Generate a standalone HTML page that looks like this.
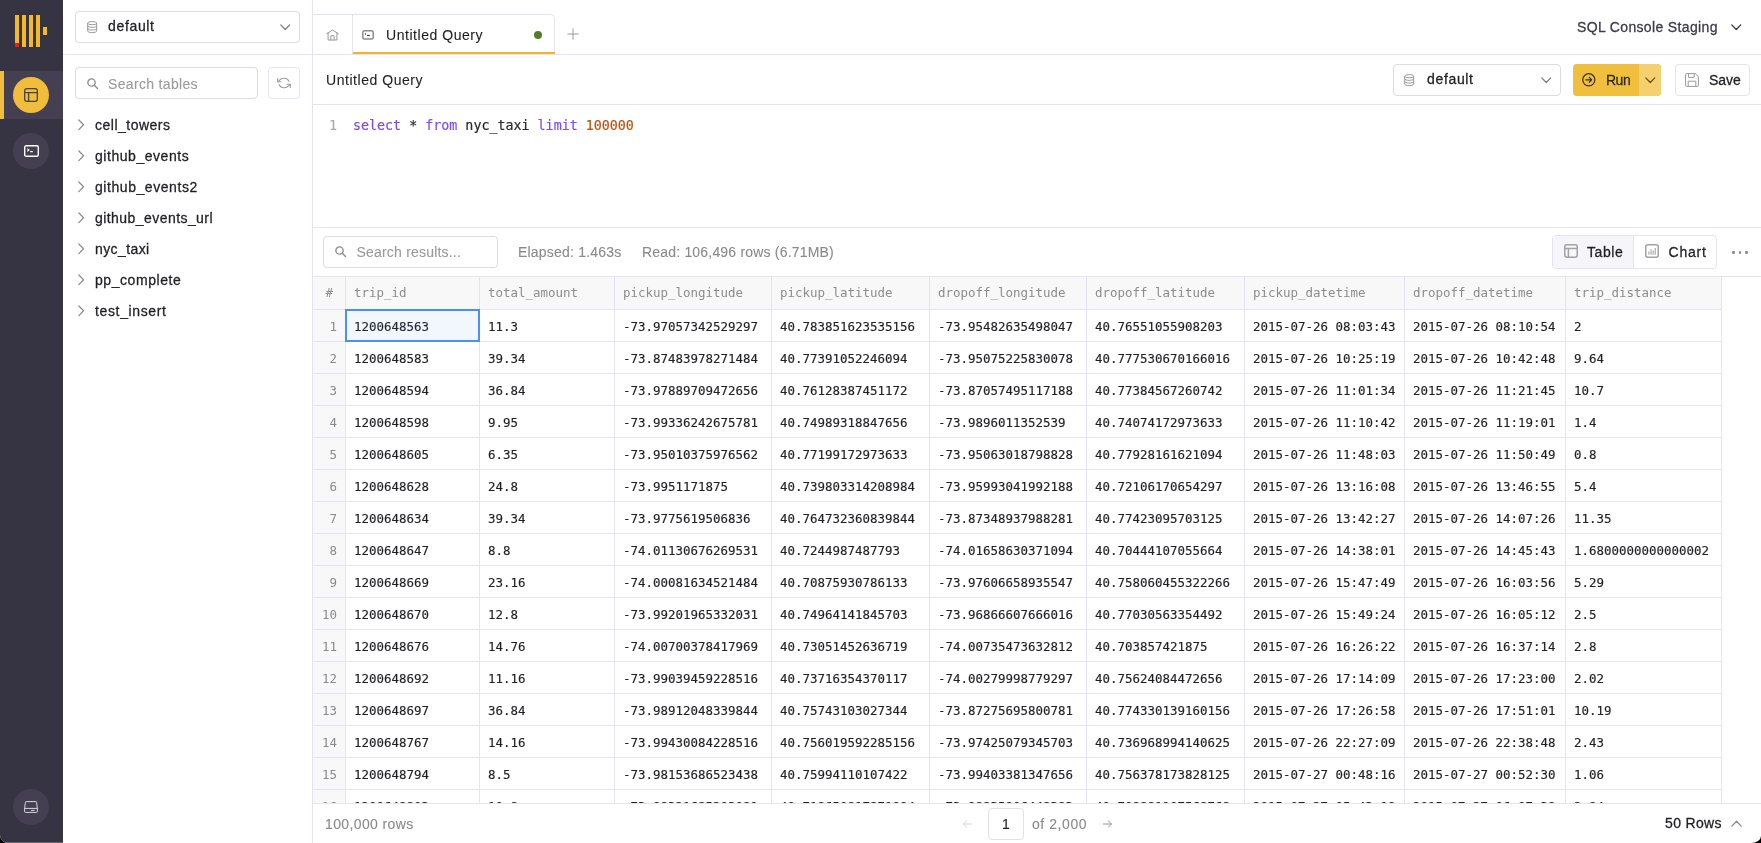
<!DOCTYPE html>
<html lang="en"><head><meta charset="utf-8"><title>SQL Console</title>
<style>
*{box-sizing:border-box;margin:0;padding:0}
html,body{width:1761px;height:843px;overflow:hidden;background:#000}
body{font-family:"Liberation Sans",Arial,sans-serif;font-size:14px;color:#1f1f24}
#app{will-change:transform;position:absolute;left:0;top:0;width:1761px;height:843px;background:#fff;border-radius:0 0 10px 8px / 0 0 7px 8px;overflow:hidden}
.abs{position:absolute}
.t{position:absolute;white-space:pre;line-height:20px;height:20px;-webkit-text-stroke:0.1px currentColor}
.m{-webkit-text-stroke:0.28px currentColor}
.mono{font-family:"DejaVu Sans Mono","Liberation Mono",monospace}
#side{position:absolute;left:0;top:0;width:63px;height:843px;background:#363342}
.circ{position:absolute;left:13px;width:36px;height:36px;border-radius:50%;background:#444051}
.box{position:absolute;border:1px solid #dcdcdc;border-radius:4px;background:#fff}
.lbox{position:absolute;border:1px solid #e3e2f7;border-radius:4px;background:#fff}
.hl{position:absolute;height:1px;background:#e3e2f7}
.vl{position:absolute;width:1px;background:#e3e2f7}
svg{position:absolute;overflow:visible}
.cell{position:absolute;white-space:pre;font-size:12.46px;line-height:16px;height:16px;color:#1f1f24;-webkit-text-stroke:0.15px currentColor}
.hd{color:#8c8c8c;-webkit-text-stroke:0}
.rn{-webkit-text-stroke:0;color:#8a8a90;text-align:right;width:20px}
</style></head>
<body><div id="app">
<div id="side">
<div class="abs" style="left:15px;top:15px;width:4px;height:32px;background:#f1b92b"></div>
<div class="abs" style="left:22px;top:15px;width:4px;height:32px;background:#f1b92b"></div>
<div class="abs" style="left:29px;top:15px;width:4px;height:32px;background:#f1b92b"></div>
<div class="abs" style="left:36px;top:15px;width:4px;height:32px;background:#f1b92b"></div>
<div class="abs" style="left:15px;top:43px;width:4px;height:4px;background:#ee1c1c"></div>
<div class="abs" style="left:43px;top:27px;width:4px;height:8px;background:#f1b92b"></div>
<div class="abs" style="left:0;top:71px;width:63px;height:48px;background:#444051"></div>
<div class="abs" style="left:0;top:71px;width:4px;height:48px;background:#f1bd3c"></div>
<div class="circ" style="top:77px;background:#f1bd3c"></div>
<svg style="left:24px;top:88px" width="14" height="14" viewBox="0 0 14 14" fill="none" stroke="#4a4234" stroke-width="1.3"><rect x="0.7" y="0.7" width="12.6" height="12.6" rx="2"/><path d="M0.7 4.6H13.3M4.6 4.6V13.3"/></svg>
<div class="circ" style="top:133px"></div>
<svg style="left:23.5px;top:145px" width="15" height="12" viewBox="0 0 15 12" fill="none" stroke="#fff" stroke-width="1.4"><rect x="0.7" y="0.7" width="13.6" height="10.6" rx="1.6"/><path d="M3.2 3.6L5 5L3.2 6.4M6.2 6.6H8.8" stroke-width="1.1"/></svg>
<div class="circ" style="top:789px"></div>
<svg style="left:24px;top:801px" width="14" height="12" viewBox="0 0 14 12" fill="none" stroke="#d8d6e0" stroke-width="1"><path d="M2.2 0.6H11.8Q12.6 0.6 12.6 1.4L13.4 8V10.4Q13.4 11.4 12.4 11.4H1.6Q0.6 11.4 0.6 10.4V8L1.4 1.4Q1.4 0.6 2.2 0.6Z"/><path d="M0.8 7.4H13.2M7 9.4H10.6"/></svg>
</div>
<div class="vl" style="left:312px;top:0;height:843px"></div>
<div class="hl" style="left:63px;top:54px;width:1698px"></div>
<div class="box" style="left:75px;top:11px;width:225px;height:32px"></div>
<svg style="left:87px;top:20.5px" width="10.3" height="12.2" viewBox="0 0 11 13" fill="none" stroke="#8e8e8e" stroke-width="0.95"><ellipse cx="5.5" cy="2.3" rx="4.8" ry="1.7"/><path d="M0.7 2.3V10.7C0.7 11.6 2.8 12.4 5.5 12.4S10.3 11.6 10.3 10.7V2.3M0.7 5.1C0.7 6 2.8 6.8 5.5 6.8S10.3 6 10.3 5.1M0.7 7.9C0.7 8.8 2.8 9.6 5.5 9.6S10.3 8.8 10.3 7.9"/></svg>
<div class="t m" style="left:108px;top:16px;letter-spacing:0.66px">default</div>
<svg style="left:280px;top:24px" width="10.5" height="6.7" viewBox="0 0 11 7" fill="none" stroke="#808080" stroke-width="1.4" stroke-linecap="round" stroke-linejoin="round"><path d="M0.8 0.9L5.5 5.8L10.2 0.9"/></svg>
<div class="box" style="left:75px;top:67px;width:183px;height:32px"></div>
<svg style="left:87px;top:77.5px" width="11.3" height="11.3" viewBox="0 0 12 12" fill="none" stroke="#8c8c8c" stroke-width="1.45" stroke-linecap="round"><circle cx="4.8" cy="4.8" r="3.9"/><path d="M7.8 7.8L11.2 11.2"/></svg>
<div class="t" style="left:108px;top:74px;color:#9a9a9a;letter-spacing:0.33px">Search tables</div>
<div class="lbox" style="left:268px;top:67px;width:32px;height:32px"></div>
<svg style="left:277px;top:77px" width="14" height="12" viewBox="0 0 14 12" fill="none" stroke="#9c9c9c" stroke-width="1.1" stroke-linecap="round" stroke-linejoin="round"><path d="M11.9 4.2A5.3 4.6 0 0 0 2.4 3.4L0.9 4.6M2.1 7.8A5.3 4.6 0 0 0 11.6 8.6L13.1 7.4"/><path d="M0.7 1.6V4.7H3.9M13.3 10.4V7.3H10.1"/></svg>
<svg style="left:78px;top:119px" width="6.6" height="11.6" viewBox="0 0 7 12" fill="none" stroke="#8c8c8c" stroke-width="1.3" stroke-linecap="round" stroke-linejoin="round"><path d="M0.9 0.9L5.9 6L0.9 11.1"/></svg>
<div class="t m" style="left:95px;top:115px;letter-spacing:0.5px">cell_towers</div>
<svg style="left:78px;top:150px" width="6.6" height="11.6" viewBox="0 0 7 12" fill="none" stroke="#8c8c8c" stroke-width="1.3" stroke-linecap="round" stroke-linejoin="round"><path d="M0.9 0.9L5.9 6L0.9 11.1"/></svg>
<div class="t m" style="left:95px;top:146px;letter-spacing:0.54px">github_events</div>
<svg style="left:78px;top:181px" width="6.6" height="11.6" viewBox="0 0 7 12" fill="none" stroke="#8c8c8c" stroke-width="1.3" stroke-linecap="round" stroke-linejoin="round"><path d="M0.9 0.9L5.9 6L0.9 11.1"/></svg>
<div class="t m" style="left:95px;top:177px;letter-spacing:0.56px">github_events2</div>
<svg style="left:78px;top:212px" width="6.6" height="11.6" viewBox="0 0 7 12" fill="none" stroke="#8c8c8c" stroke-width="1.3" stroke-linecap="round" stroke-linejoin="round"><path d="M0.9 0.9L5.9 6L0.9 11.1"/></svg>
<div class="t m" style="left:95px;top:208px;letter-spacing:0.44px">github_events_url</div>
<svg style="left:78px;top:243px" width="6.6" height="11.6" viewBox="0 0 7 12" fill="none" stroke="#8c8c8c" stroke-width="1.3" stroke-linecap="round" stroke-linejoin="round"><path d="M0.9 0.9L5.9 6L0.9 11.1"/></svg>
<div class="t m" style="left:95px;top:239px;letter-spacing:0.41px">nyc_taxi</div>
<svg style="left:78px;top:274px" width="6.6" height="11.6" viewBox="0 0 7 12" fill="none" stroke="#8c8c8c" stroke-width="1.3" stroke-linecap="round" stroke-linejoin="round"><path d="M0.9 0.9L5.9 6L0.9 11.1"/></svg>
<div class="t m" style="left:95px;top:270px;letter-spacing:0.56px">pp_complete</div>
<svg style="left:78px;top:305px" width="6.6" height="11.6" viewBox="0 0 7 12" fill="none" stroke="#8c8c8c" stroke-width="1.3" stroke-linecap="round" stroke-linejoin="round"><path d="M0.9 0.9L5.9 6L0.9 11.1"/></svg>
<div class="t m" style="left:95px;top:301px;letter-spacing:0.64px">test_insert</div>
<div class="abs" style="left:313px;top:14px;width:242px;height:41px;border-top:1px solid #e3e2f7;border-right:1px solid #e3e2f7;border-radius:0 5px 0 0"></div>
<div class="vl" style="left:352px;top:15px;height:39px"></div>
<div class="abs" style="left:353px;top:52px;width:202px;height:2px;background:#f0b429"></div>
<svg style="left:326px;top:28px" width="13" height="13" viewBox="0 0 13 13" fill="none" stroke="#9a9a9a" stroke-width="1" stroke-linejoin="round" stroke-linecap="round"><path d="M0.7 5.7L6.5 2L12.3 5.7M2.1 5V12H10.9V5M4.9 12V7.7H8.1V12"/></svg>
<svg style="left:362px;top:30px" width="12" height="10" viewBox="0 0 12 10" fill="none"><rect x="0.8" y="0.8" width="10.4" height="8.3" rx="1.5" stroke="#8c8c8c" stroke-width="1.5"/><path d="M3.5 3.3V4.7M5 5.4H7.8" stroke="#2a2a2a" stroke-width="1"/></svg>
<div class="t" style="left:386px;top:25px;letter-spacing:0.54px">Untitled Query</div>
<div class="abs" style="left:534px;top:31px;width:8px;height:8px;border-radius:50%;background:#557d27"></div>
<svg style="left:567px;top:28px" width="12" height="12" viewBox="0 0 12 12" fill="none" stroke="#9a9a9a" stroke-width="1"><path d="M6 0.5V11.5M0.5 6H11.5"/></svg>
<div class="t m" style="left:1577px;top:17px;color:#3a3a48;letter-spacing:0.35px">SQL Console Staging</div>
<svg style="left:1731px;top:24px" width="10.5" height="6.7" viewBox="0 0 11 7" fill="none" stroke="#3a3a48" stroke-width="1.4" stroke-linecap="round" stroke-linejoin="round"><path d="M0.8 0.9L5.5 5.8L10.2 0.9"/></svg>
<div class="hl" style="left:313px;top:104px;width:1448px"></div>
<div class="t" style="left:326px;top:70px;letter-spacing:0.54px">Untitled Query</div>
<div class="box" style="left:1393px;top:64px;width:168px;height:32px"></div>
<svg style="left:1404px;top:73.5px" width="10.3" height="12.2" viewBox="0 0 11 13" fill="none" stroke="#8e8e8e" stroke-width="0.95"><ellipse cx="5.5" cy="2.3" rx="4.8" ry="1.7"/><path d="M0.7 2.3V10.7C0.7 11.6 2.8 12.4 5.5 12.4S10.3 11.6 10.3 10.7V2.3M0.7 5.1C0.7 6 2.8 6.8 5.5 6.8S10.3 6 10.3 5.1M0.7 7.9C0.7 8.8 2.8 9.6 5.5 9.6S10.3 8.8 10.3 7.9"/></svg>
<div class="t m" style="left:1427px;top:69px;letter-spacing:0.66px">default</div>
<svg style="left:1540.5px;top:77px" width="10.5" height="6.7" viewBox="0 0 11 7" fill="none" stroke="#808080" stroke-width="1.4" stroke-linecap="round" stroke-linejoin="round"><path d="M0.8 0.9L5.5 5.8L10.2 0.9"/></svg>
<div class="abs" style="left:1573px;top:64px;width:88px;height:32px;border-radius:4px;background:#f1bf3e;overflow:hidden"><div class="abs" style="left:66px;top:0;width:22px;height:32px;background:#f5d06f"></div></div>
<svg style="left:1581.6px;top:73px" width="13.6" height="13.6" viewBox="0 0 15 15" fill="none" stroke="#3b3320" stroke-width="1.4" stroke-linecap="round" stroke-linejoin="round"><circle cx="7.5" cy="7.5" r="6.7"/><path d="M4.2 7.5H10.6M8 4.8L10.7 7.5L8 10.2"/></svg>
<div class="t m" style="left:1606px;top:70px;color:#2e2a1c;letter-spacing:-0.5px">Run</div>
<svg style="left:1644.5px;top:77px" width="10.5" height="6.7" viewBox="0 0 11 7" fill="none" stroke="#6b5518" stroke-width="1.4" stroke-linecap="round" stroke-linejoin="round"><path d="M0.8 0.9L5.5 5.8L10.2 0.9"/></svg>
<div class="lbox" style="left:1675px;top:64px;width:75px;height:32px"></div>
<svg style="left:1685px;top:73px" width="14" height="14" viewBox="0 0 14 14" fill="none" stroke="#9a9a9a" stroke-width="1" stroke-linejoin="round"><path d="M1.6 0.6H10.2L13.4 3.6V12.4Q13.4 13.4 12.4 13.4H1.6Q0.6 13.4 0.6 12.4V1.6Q0.6 0.6 1.6 0.6Z"/><path d="M3.6 0.8V4.4H9.2V0.8M3.2 13.2V8.2H10.8V13.2"/></svg>
<div class="t m" style="left:1709px;top:70px">Save</div>
<div class="t mono" style="left:329px;top:116px;font-size:13.33px;color:#aaaaaa">1</div>
<div class="t mono" style="left:353px;top:116px;font-size:13.33px;color:#2a2a2a;-webkit-text-stroke:0.2px currentColor"><span style="color:#7c4dff">select</span> * <span style="color:#7c4dff">from</span> nyc_taxi <span style="color:#7c4dff">limit</span> <span style="color:#c4500c">100000</span></div>
<div class="hl" style="left:313px;top:227px;width:1448px"></div>
<div class="box" style="left:323px;top:236px;width:175px;height:32px"></div>
<svg style="left:335px;top:246px" width="11.3" height="11.3" viewBox="0 0 12 12" fill="none" stroke="#8c8c8c" stroke-width="1.45" stroke-linecap="round"><circle cx="4.8" cy="4.8" r="3.9"/><path d="M7.8 7.8L11.2 11.2"/></svg>
<div class="t" style="left:356.5px;top:242px;color:#9a9a9a;letter-spacing:0.2px">Search results...</div>
<div class="t" style="left:518px;top:242px;color:#8a8a8a;letter-spacing:0.21px">Elapsed: 1.463s</div>
<div class="t" style="left:642px;top:242px;color:#8a8a8a;letter-spacing:0.19px">Read: 106,496 rows (6.71MB)</div>
<div class="abs" style="left:1552px;top:235px;width:165px;height:34px;border:1px solid #e3e2f7;border-radius:4px;background:#fff;overflow:hidden"><div class="abs" style="left:0;top:0;width:81px;height:32px;background:#f6f6fa;border-right:1px solid #e3e2f7"></div></div>
<svg style="left:1564px;top:244px" width="14" height="14" viewBox="0 0 14 14" fill="none" stroke="#a2a2a2" stroke-width="1.5"><rect x="0.75" y="0.75" width="12.5" height="12.5" rx="2.2"/><path d="M0.6 4.4H13.4M4.4 4.4V13.4"/></svg>
<div class="t m" style="left:1587px;top:242px;letter-spacing:0.58px">Table</div>
<svg style="left:1645px;top:244px" width="14" height="14" viewBox="0 0 14 14" fill="none" stroke="#a2a2a2" stroke-width="1.5"><rect x="0.75" y="0.75" width="12.5" height="12.5" rx="2.2"/><path d="M3.9 10.8V7.6M6 10.8V5.2M8.1 10.8V6.6M10.2 10.8V4" stroke-width="1.1"/></svg>
<div class="t m" style="left:1668.5px;top:242px;letter-spacing:0.79px">Chart</div>
<div class="abs" style="left:1732px;top:251px;width:2.6px;height:2.6px;border-radius:50%;background:#8a8a8a"></div>
<div class="abs" style="left:1738.5px;top:251px;width:2.6px;height:2.6px;border-radius:50%;background:#8a8a8a"></div>
<div class="abs" style="left:1745px;top:251px;width:2.6px;height:2.6px;border-radius:50%;background:#8a8a8a"></div>
<div class="abs" style="left:313px;top:276px;width:1448px;height:527px;overflow:hidden">
<div class="abs" style="left:0;top:1px;width:1408px;height:33px;background:#f8f8f8"></div>
<div class="abs" style="left:0;top:34px;width:32px;height:520px;background:#f8f8f8"></div>
<div class="hl" style="left:0;top:0;width:1448px"></div>
<div class="hl" style="left:0;top:33px;width:1409px"></div>
<div class="hl" style="left:0;top:65px;width:1409px"></div>
<div class="hl" style="left:0;top:97px;width:1409px"></div>
<div class="hl" style="left:0;top:129px;width:1409px"></div>
<div class="hl" style="left:0;top:161px;width:1409px"></div>
<div class="hl" style="left:0;top:193px;width:1409px"></div>
<div class="hl" style="left:0;top:225px;width:1409px"></div>
<div class="hl" style="left:0;top:257px;width:1409px"></div>
<div class="hl" style="left:0;top:289px;width:1409px"></div>
<div class="hl" style="left:0;top:321px;width:1409px"></div>
<div class="hl" style="left:0;top:353px;width:1409px"></div>
<div class="hl" style="left:0;top:385px;width:1409px"></div>
<div class="hl" style="left:0;top:417px;width:1409px"></div>
<div class="hl" style="left:0;top:449px;width:1409px"></div>
<div class="hl" style="left:0;top:481px;width:1409px"></div>
<div class="hl" style="left:0;top:513px;width:1409px"></div>
<div class="hl" style="left:0;top:545px;width:1409px"></div>
<div class="vl" style="left:32px;top:0;height:560px"></div>
<div class="vl" style="left:166px;top:0;height:560px"></div>
<div class="vl" style="left:301px;top:0;height:560px"></div>
<div class="vl" style="left:458px;top:0;height:560px"></div>
<div class="vl" style="left:616px;top:0;height:560px"></div>
<div class="vl" style="left:773px;top:0;height:560px"></div>
<div class="vl" style="left:931px;top:0;height:560px"></div>
<div class="vl" style="left:1091px;top:0;height:560px"></div>
<div class="vl" style="left:1252px;top:0;height:560px"></div>
<div class="vl" style="left:1408px;top:0;height:560px"></div>
<div class="cell mono hd" style="left:12.5px;top:9px">#</div>
<div class="cell mono hd" style="left:41px;top:9px">trip_id</div>
<div class="cell mono hd" style="left:175px;top:9px">total_amount</div>
<div class="cell mono hd" style="left:310px;top:9px">pickup_longitude</div>
<div class="cell mono hd" style="left:467px;top:9px">pickup_latitude</div>
<div class="cell mono hd" style="left:625px;top:9px">dropoff_longitude</div>
<div class="cell mono hd" style="left:782px;top:9px">dropoff_latitude</div>
<div class="cell mono hd" style="left:940px;top:9px">pickup_datetime</div>
<div class="cell mono hd" style="left:1100px;top:9px">dropoff_datetime</div>
<div class="cell mono hd" style="left:1261px;top:9px">trip_distance</div>
<div class="cell mono rn" style="left:4px;top:43px">1</div>
<div class="cell mono" style="left:41px;top:43px">1200648563</div>
<div class="cell mono" style="left:175px;top:43px">11.3</div>
<div class="cell mono" style="left:310px;top:43px">-73.97057342529297</div>
<div class="cell mono" style="left:467px;top:43px">40.783851623535156</div>
<div class="cell mono" style="left:625px;top:43px">-73.95482635498047</div>
<div class="cell mono" style="left:782px;top:43px">40.76551055908203</div>
<div class="cell mono" style="left:940px;top:43px">2015-07-26 08:03:43</div>
<div class="cell mono" style="left:1100px;top:43px">2015-07-26 08:10:54</div>
<div class="cell mono" style="left:1261px;top:43px">2</div>
<div class="cell mono rn" style="left:4px;top:75px">2</div>
<div class="cell mono" style="left:41px;top:75px">1200648583</div>
<div class="cell mono" style="left:175px;top:75px">39.34</div>
<div class="cell mono" style="left:310px;top:75px">-73.87483978271484</div>
<div class="cell mono" style="left:467px;top:75px">40.77391052246094</div>
<div class="cell mono" style="left:625px;top:75px">-73.95075225830078</div>
<div class="cell mono" style="left:782px;top:75px">40.777530670166016</div>
<div class="cell mono" style="left:940px;top:75px">2015-07-26 10:25:19</div>
<div class="cell mono" style="left:1100px;top:75px">2015-07-26 10:42:48</div>
<div class="cell mono" style="left:1261px;top:75px">9.64</div>
<div class="cell mono rn" style="left:4px;top:107px">3</div>
<div class="cell mono" style="left:41px;top:107px">1200648594</div>
<div class="cell mono" style="left:175px;top:107px">36.84</div>
<div class="cell mono" style="left:310px;top:107px">-73.97889709472656</div>
<div class="cell mono" style="left:467px;top:107px">40.76128387451172</div>
<div class="cell mono" style="left:625px;top:107px">-73.87057495117188</div>
<div class="cell mono" style="left:782px;top:107px">40.77384567260742</div>
<div class="cell mono" style="left:940px;top:107px">2015-07-26 11:01:34</div>
<div class="cell mono" style="left:1100px;top:107px">2015-07-26 11:21:45</div>
<div class="cell mono" style="left:1261px;top:107px">10.7</div>
<div class="cell mono rn" style="left:4px;top:139px">4</div>
<div class="cell mono" style="left:41px;top:139px">1200648598</div>
<div class="cell mono" style="left:175px;top:139px">9.95</div>
<div class="cell mono" style="left:310px;top:139px">-73.99336242675781</div>
<div class="cell mono" style="left:467px;top:139px">40.74989318847656</div>
<div class="cell mono" style="left:625px;top:139px">-73.9896011352539</div>
<div class="cell mono" style="left:782px;top:139px">40.74074172973633</div>
<div class="cell mono" style="left:940px;top:139px">2015-07-26 11:10:42</div>
<div class="cell mono" style="left:1100px;top:139px">2015-07-26 11:19:01</div>
<div class="cell mono" style="left:1261px;top:139px">1.4</div>
<div class="cell mono rn" style="left:4px;top:171px">5</div>
<div class="cell mono" style="left:41px;top:171px">1200648605</div>
<div class="cell mono" style="left:175px;top:171px">6.35</div>
<div class="cell mono" style="left:310px;top:171px">-73.95010375976562</div>
<div class="cell mono" style="left:467px;top:171px">40.77199172973633</div>
<div class="cell mono" style="left:625px;top:171px">-73.95063018798828</div>
<div class="cell mono" style="left:782px;top:171px">40.77928161621094</div>
<div class="cell mono" style="left:940px;top:171px">2015-07-26 11:48:03</div>
<div class="cell mono" style="left:1100px;top:171px">2015-07-26 11:50:49</div>
<div class="cell mono" style="left:1261px;top:171px">0.8</div>
<div class="cell mono rn" style="left:4px;top:203px">6</div>
<div class="cell mono" style="left:41px;top:203px">1200648628</div>
<div class="cell mono" style="left:175px;top:203px">24.8</div>
<div class="cell mono" style="left:310px;top:203px">-73.9951171875</div>
<div class="cell mono" style="left:467px;top:203px">40.739803314208984</div>
<div class="cell mono" style="left:625px;top:203px">-73.95993041992188</div>
<div class="cell mono" style="left:782px;top:203px">40.72106170654297</div>
<div class="cell mono" style="left:940px;top:203px">2015-07-26 13:16:08</div>
<div class="cell mono" style="left:1100px;top:203px">2015-07-26 13:46:55</div>
<div class="cell mono" style="left:1261px;top:203px">5.4</div>
<div class="cell mono rn" style="left:4px;top:235px">7</div>
<div class="cell mono" style="left:41px;top:235px">1200648634</div>
<div class="cell mono" style="left:175px;top:235px">39.34</div>
<div class="cell mono" style="left:310px;top:235px">-73.9775619506836</div>
<div class="cell mono" style="left:467px;top:235px">40.764732360839844</div>
<div class="cell mono" style="left:625px;top:235px">-73.87348937988281</div>
<div class="cell mono" style="left:782px;top:235px">40.77423095703125</div>
<div class="cell mono" style="left:940px;top:235px">2015-07-26 13:42:27</div>
<div class="cell mono" style="left:1100px;top:235px">2015-07-26 14:07:26</div>
<div class="cell mono" style="left:1261px;top:235px">11.35</div>
<div class="cell mono rn" style="left:4px;top:267px">8</div>
<div class="cell mono" style="left:41px;top:267px">1200648647</div>
<div class="cell mono" style="left:175px;top:267px">8.8</div>
<div class="cell mono" style="left:310px;top:267px">-74.01130676269531</div>
<div class="cell mono" style="left:467px;top:267px">40.7244987487793</div>
<div class="cell mono" style="left:625px;top:267px">-74.01658630371094</div>
<div class="cell mono" style="left:782px;top:267px">40.70444107055664</div>
<div class="cell mono" style="left:940px;top:267px">2015-07-26 14:38:01</div>
<div class="cell mono" style="left:1100px;top:267px">2015-07-26 14:45:43</div>
<div class="cell mono" style="left:1261px;top:267px">1.6800000000000002</div>
<div class="cell mono rn" style="left:4px;top:299px">9</div>
<div class="cell mono" style="left:41px;top:299px">1200648669</div>
<div class="cell mono" style="left:175px;top:299px">23.16</div>
<div class="cell mono" style="left:310px;top:299px">-74.00081634521484</div>
<div class="cell mono" style="left:467px;top:299px">40.70875930786133</div>
<div class="cell mono" style="left:625px;top:299px">-73.97606658935547</div>
<div class="cell mono" style="left:782px;top:299px">40.758060455322266</div>
<div class="cell mono" style="left:940px;top:299px">2015-07-26 15:47:49</div>
<div class="cell mono" style="left:1100px;top:299px">2015-07-26 16:03:56</div>
<div class="cell mono" style="left:1261px;top:299px">5.29</div>
<div class="cell mono rn" style="left:4px;top:331px">10</div>
<div class="cell mono" style="left:41px;top:331px">1200648670</div>
<div class="cell mono" style="left:175px;top:331px">12.8</div>
<div class="cell mono" style="left:310px;top:331px">-73.99201965332031</div>
<div class="cell mono" style="left:467px;top:331px">40.74964141845703</div>
<div class="cell mono" style="left:625px;top:331px">-73.96866607666016</div>
<div class="cell mono" style="left:782px;top:331px">40.77030563354492</div>
<div class="cell mono" style="left:940px;top:331px">2015-07-26 15:49:24</div>
<div class="cell mono" style="left:1100px;top:331px">2015-07-26 16:05:12</div>
<div class="cell mono" style="left:1261px;top:331px">2.5</div>
<div class="cell mono rn" style="left:4px;top:363px">11</div>
<div class="cell mono" style="left:41px;top:363px">1200648676</div>
<div class="cell mono" style="left:175px;top:363px">14.76</div>
<div class="cell mono" style="left:310px;top:363px">-74.00700378417969</div>
<div class="cell mono" style="left:467px;top:363px">40.73051452636719</div>
<div class="cell mono" style="left:625px;top:363px">-74.00735473632812</div>
<div class="cell mono" style="left:782px;top:363px">40.703857421875</div>
<div class="cell mono" style="left:940px;top:363px">2015-07-26 16:26:22</div>
<div class="cell mono" style="left:1100px;top:363px">2015-07-26 16:37:14</div>
<div class="cell mono" style="left:1261px;top:363px">2.8</div>
<div class="cell mono rn" style="left:4px;top:395px">12</div>
<div class="cell mono" style="left:41px;top:395px">1200648692</div>
<div class="cell mono" style="left:175px;top:395px">11.16</div>
<div class="cell mono" style="left:310px;top:395px">-73.99039459228516</div>
<div class="cell mono" style="left:467px;top:395px">40.73716354370117</div>
<div class="cell mono" style="left:625px;top:395px">-74.00279998779297</div>
<div class="cell mono" style="left:782px;top:395px">40.75624084472656</div>
<div class="cell mono" style="left:940px;top:395px">2015-07-26 17:14:09</div>
<div class="cell mono" style="left:1100px;top:395px">2015-07-26 17:23:00</div>
<div class="cell mono" style="left:1261px;top:395px">2.02</div>
<div class="cell mono rn" style="left:4px;top:427px">13</div>
<div class="cell mono" style="left:41px;top:427px">1200648697</div>
<div class="cell mono" style="left:175px;top:427px">36.84</div>
<div class="cell mono" style="left:310px;top:427px">-73.98912048339844</div>
<div class="cell mono" style="left:467px;top:427px">40.75743103027344</div>
<div class="cell mono" style="left:625px;top:427px">-73.87275695800781</div>
<div class="cell mono" style="left:782px;top:427px">40.774330139160156</div>
<div class="cell mono" style="left:940px;top:427px">2015-07-26 17:26:58</div>
<div class="cell mono" style="left:1100px;top:427px">2015-07-26 17:51:01</div>
<div class="cell mono" style="left:1261px;top:427px">10.19</div>
<div class="cell mono rn" style="left:4px;top:459px">14</div>
<div class="cell mono" style="left:41px;top:459px">1200648767</div>
<div class="cell mono" style="left:175px;top:459px">14.16</div>
<div class="cell mono" style="left:310px;top:459px">-73.99430084228516</div>
<div class="cell mono" style="left:467px;top:459px">40.756019592285156</div>
<div class="cell mono" style="left:625px;top:459px">-73.97425079345703</div>
<div class="cell mono" style="left:782px;top:459px">40.736968994140625</div>
<div class="cell mono" style="left:940px;top:459px">2015-07-26 22:27:09</div>
<div class="cell mono" style="left:1100px;top:459px">2015-07-26 22:38:48</div>
<div class="cell mono" style="left:1261px;top:459px">2.43</div>
<div class="cell mono rn" style="left:4px;top:491px">15</div>
<div class="cell mono" style="left:41px;top:491px">1200648794</div>
<div class="cell mono" style="left:175px;top:491px">8.5</div>
<div class="cell mono" style="left:310px;top:491px">-73.98153686523438</div>
<div class="cell mono" style="left:467px;top:491px">40.75994110107422</div>
<div class="cell mono" style="left:625px;top:491px">-73.99403381347656</div>
<div class="cell mono" style="left:782px;top:491px">40.756378173828125</div>
<div class="cell mono" style="left:940px;top:491px">2015-07-27 00:48:16</div>
<div class="cell mono" style="left:1100px;top:491px">2015-07-27 00:52:30</div>
<div class="cell mono" style="left:1261px;top:491px">1.06</div>
<div class="cell mono rn" style="left:4px;top:523px">16</div>
<div class="cell mono" style="left:41px;top:523px">1200648803</div>
<div class="cell mono" style="left:175px;top:523px">10.8</div>
<div class="cell mono" style="left:310px;top:523px">-73.98321685203081</div>
<div class="cell mono" style="left:467px;top:523px">40.718650817871094</div>
<div class="cell mono" style="left:625px;top:523px">-73.98835906448383</div>
<div class="cell mono" style="left:782px;top:523px">40.708881107568768</div>
<div class="cell mono" style="left:940px;top:523px">2015-07-27 05:43:19</div>
<div class="cell mono" style="left:1100px;top:523px">2015-07-27 06:07:38</div>
<div class="cell mono" style="left:1261px;top:523px">2.84</div>
<div class="abs" style="left:32px;top:33px;width:135px;height:33px;border:2px solid #4a90f8;background:rgba(74,138,244,0.07)"></div>
</div>
<div class="abs" style="left:313px;top:803px;width:1448px;height:1px;background:#e6e6e6"></div>
<div class="t" style="left:325px;top:814px;color:#8a8a8a;letter-spacing:0.38px">100,000 rows</div>
<svg style="left:963px;top:820px" width="9" height="8" viewBox="0 0 9 8" fill="none" stroke="#d6d6d6" stroke-width="1" stroke-linecap="round" stroke-linejoin="round"><path d="M8.5 4H0.7M3.6 0.8L0.6 4L3.6 7.2"/></svg>
<div class="box" style="left:988px;top:808px;width:36px;height:32px;border-color:#e2e2e2"></div>
<div class="t" style="left:988px;top:814px;width:36px;text-align:center">1</div>
<div class="t" style="left:1032px;top:814px;color:#8a8a8a;letter-spacing:0.56px">of 2,000</div>
<svg style="left:1103px;top:820px" width="9" height="8" viewBox="0 0 9 8" fill="none" stroke="#9a9a9a" stroke-width="1" stroke-linecap="round" stroke-linejoin="round"><path d="M0.5 4H8.3M5.4 0.8L8.4 4L5.4 7.2"/></svg>
<div class="t m" style="left:1665px;top:813px;letter-spacing:0.34px">50 Rows</div>
<svg style="left:1730.5px;top:820px" width="11" height="7" viewBox="0 0 11 7" fill="none" stroke="#8a8a8a" stroke-width="1.3" stroke-linecap="round" stroke-linejoin="round"><path d="M0.8 6.1L5.5 1.2L10.2 6.1"/></svg>
<div class="abs" style="left:0;top:842px;width:1761px;height:1px;background:rgba(255,255,255,0.25)"></div>
</div></body></html>
